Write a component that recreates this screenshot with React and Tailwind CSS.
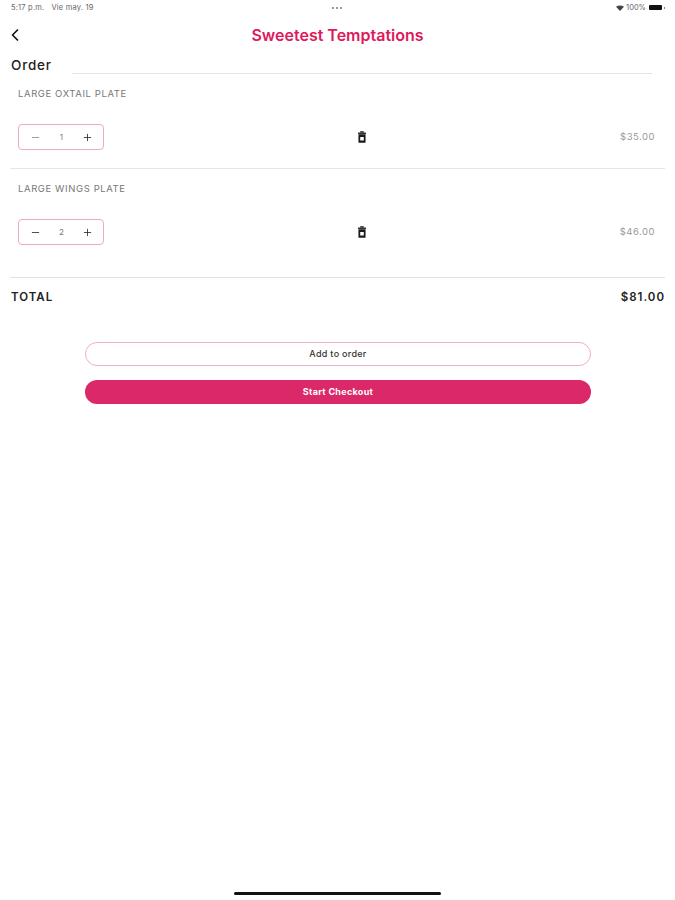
import { ChevronLeft, Minus, Plus } from 'lucide-react'

const items = [
  { name: 'LARGE OXTAIL PLATE', qty: 1, price: '$35.00' },
  { name: 'LARGE WINGS PLATE', qty: 2, price: '$46.00', last: true },
]

function TrashIcon() {
  return (
    <svg width="8" height="12" viewBox="0 0 9 13" className="text-[#1a1a1a]">
      <rect x="2.5" y="0" width="4" height="1.5" fill="currentColor" />
      <rect x="0" y="1.5" width="9" height="1.5" fill="currentColor" />
      <path fillRule="evenodd" fill="currentColor" d="M0.5 3.5h8v8.5a1 1 0 0 1-1 1h-6a1 1 0 0 1-1-1zM2.5 6.5v4h4v-4z" />
    </svg>
  )
}

function StatusBar() {
  return (
    <div className="relative flex h-[15px] items-center justify-between pl-[11px] pr-[10px] text-[7.5px] text-[#666]">
      <div className="flex gap-[7px] tracking-[0.2px]">
        <span>5:17 p.m.</span>
        <span>Vie may. 19</span>
      </div>
      <div className="absolute left-[332px] top-[7px] flex gap-[2px]">
        <span className="h-[1.5px] w-[2px] rounded-full bg-[#777]" />
        <span className="h-[1.5px] w-[2px] rounded-full bg-[#777]" />
        <span className="h-[1.5px] w-[2px] rounded-full bg-[#777]" />
      </div>
      <div className="flex items-center gap-[2px]">
        <svg width="8" height="6" viewBox="0 0 8 6"><path d="M0 1.8Q4-1 8 1.8L4 6z" fill="#444" /></svg>
        <span>100%</span>
        <span className="ml-[1px] h-[5px] w-[13px] rounded-[1px] bg-[#111]" />
        <span className="h-[2px] w-[1px] bg-[#888]" />
      </div>
    </div>
  )
}

function OrderItem({ item }) {
  return (
    <div className={`pt-[12px] ${item.last ? 'h-[96px]' : 'h-[95px] border-b border-[#e6e6e6]'}`}>
      <div className="pl-2 text-[9.5px] leading-[15px] tracking-[0.6px] text-[#777]">{item.name}</div>
      <div className="mt-[23px] flex items-center justify-between pl-2 pr-[10px]">
        <div className="flex h-[26px] w-[86px] items-center justify-between rounded-[4px] border border-[#f0a9bf] pl-[11px] pr-[10px]">
          <Minus size={11} strokeWidth={1.75} color={item.qty === 1 ? '#888' : '#222'} />
          <span className="text-[8px] text-[#777]">{item.qty}</span>
          <Plus size={11} strokeWidth={1.75} color="#222" />
        </div>
        <TrashIcon />
        <span className="text-[9.5px] tracking-[0.5px] text-[#999]">{item.price}</span>
      </div>
    </div>
  )
}

export default function App() {
  return (
    <div className="min-h-[900px] bg-white font-['Inter',sans-serif]">
      <StatusBar />
      <div className="relative flex h-[40px] items-center justify-center">
        <ChevronLeft size={20} strokeWidth={2} color="#111" className="absolute left-[5px] top-[10px]" />
        <h1 className="text-[16px] font-semibold text-[#dd1a5c]">Sweetest Temptations</h1>
      </div>
      <div className="px-[10px]">
        <div className="flex h-[19px] items-end">
          <span className="ml-[1px] w-[41px] text-[13.5px] font-medium leading-[18px] tracking-[0.8px] text-[#222]">Order</span>
          <div className="ml-[20px] w-[580px] border-b border-[#e4e4e4]" />
        </div>
        {items.map((item) => (
          <OrderItem key={item.name} item={item} />
        ))}
        <div className="h-[13px] border-b border-[#e2e2e2]" />
        <div className="flex items-center justify-between pl-[1px] pt-[11px] text-[11.5px] font-semibold leading-[16px] tracking-[1px] text-[#222]">
          <span>TOTAL</span>
          <span>$81.00</span>
        </div>
      </div>
      <div className="mt-[37px] flex flex-col gap-[14px] pl-[85px] pr-[84px]">
        <button className="h-[24px] rounded-full border border-[#eeb0c4] bg-white text-[9px] font-medium tracking-[0.3px] text-[#333]">
          Add to order
        </button>
        <button className="h-[24px] rounded-full bg-[#da2868] text-[9px] font-bold tracking-[0.3px] text-white">
          Start Checkout
        </button>
      </div>
      <div className="mt-[488px] flex justify-center">
        <div className="h-[3px] w-[207px] rounded-full bg-[#111]" />
      </div>
    </div>
  )
}
